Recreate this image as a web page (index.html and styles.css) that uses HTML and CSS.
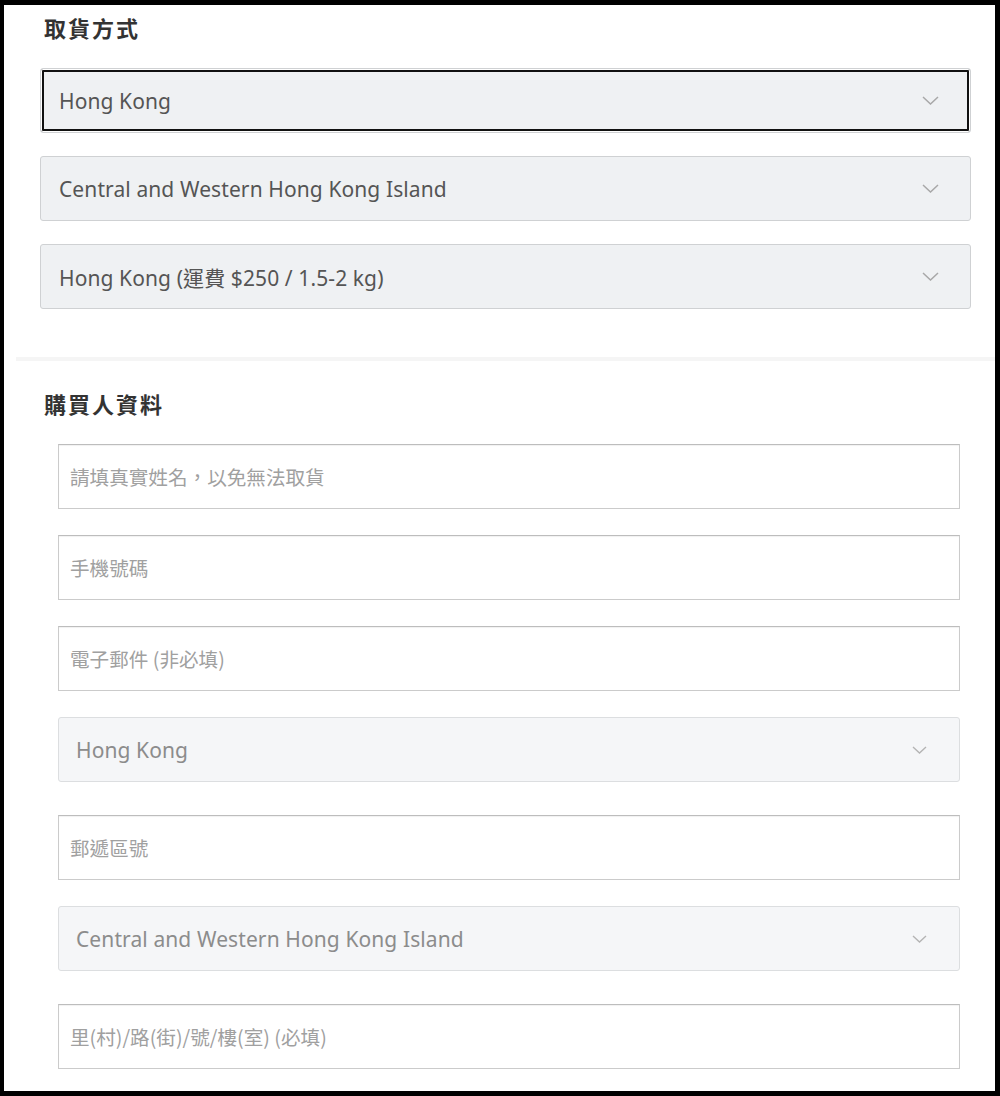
FILE: index.html
```html
<!DOCTYPE html>
<html lang="zh-Hant">
<head>
<meta charset="utf-8">
<title>取貨方式</title>
<link rel="stylesheet" href="styles.css">
</head>
<body>
<div class="frame">
  <section class="pickup">
    <h2 class="title">取貨方式</h2>
    <div class="select select-main is-focused">
      <span class="select-text">Hong Kong</span>
      <svg class="chev" width="17" height="9" viewBox="0 0 17 9"><polyline points="1,1 8.5,8 16,1" fill="none" stroke="#a8a8a8" stroke-width="1.5"/></svg>
    </div>
    <div class="select select-main">
      <span class="select-text">Central and Western Hong Kong Island</span>
      <svg class="chev" width="17" height="9" viewBox="0 0 17 9"><polyline points="1,1 8.5,8 16,1" fill="none" stroke="#a8a8a8" stroke-width="1.5"/></svg>
    </div>
    <div class="select select-main">
      <span class="select-text">Hong Kong (運費 $250 / 1.5-2 kg)</span>
      <svg class="chev" width="17" height="9" viewBox="0 0 17 9"><polyline points="1,1 8.5,8 16,1" fill="none" stroke="#a8a8a8" stroke-width="1.5"/></svg>
    </div>
  </section>
  <div class="divider"></div>
  <section class="buyer">
    <h2 class="title">購買人資料</h2>
    <div class="field"><span class="ph">請填真實姓名，以免無法取貨</span></div>
    <div class="field"><span class="ph">手機號碼</span></div>
    <div class="field"><span class="ph">電子郵件 (非必填)</span></div>
    <div class="select select-sub">
      <span class="select-text">Hong Kong</span>
      <svg class="chev" width="15" height="8" viewBox="0 0 15 8"><polyline points="1,1 7.5,7 14,1" fill="none" stroke="#b4b4b4" stroke-width="1.4"/></svg>
    </div>
    <div class="field"><span class="ph">郵遞區號</span></div>
    <div class="select select-sub">
      <span class="select-text">Central and Western Hong Kong Island</span>
      <svg class="chev" width="15" height="8" viewBox="0 0 15 8"><polyline points="1,1 7.5,7 14,1" fill="none" stroke="#b4b4b4" stroke-width="1.4"/></svg>
    </div>
    <div class="field"><span class="ph">里(村)/路(街)/號/樓(室) (必填)</span></div>
  </section>
</div>
</body>
</html>
```

FILE: styles.css
```css
html {
  background: #000;
}
body {
  margin: 0;
  padding: 5px 5px 5px 4px;
  font-family: "Noto Sans", "Noto Sans CJK TC", sans-serif;
}
.frame {
  background: #fff;
  height: 1086px;
  overflow: hidden;
}
.title {
  margin: 0;
  font-family: "Noto Sans CJK TC", sans-serif;
  font-size: 22px;
  font-weight: 700;
  letter-spacing: 2px;
  line-height: 30px;
  color: #333;
}
.pickup {
  padding: 7px 24px 48px 36px;
}
.pickup .title {
  margin: 0 0 26px 4px;
}
.select {
  box-sizing: border-box;
  height: 65px;
  display: flex;
  align-items: center;
  justify-content: space-between;
  border-radius: 3px;
}
.select-main {
  background: #eff1f3;
  border: 1px solid #cfd1d3;
  padding: 0 31px 0 18px;
  margin-bottom: 23px;
}
.select-main:last-child {
  margin-bottom: 0;
}
.select-text {
  font-size: 21px;
  letter-spacing: 0.1px;
}
.select-main .select-text {
  color: #555;
}
.is-focused {
  box-shadow: inset 0 0 0 1px #fff, inset 0 0 0 3px #111;
}
.divider {
  height: 4px;
  margin-left: 12px;
  background: #f5f5f5;
}
.buyer {
  padding: 27px 35px 0 54px;
}
.buyer .title {
  margin: 0 0 26px -14px;
}
.field {
  box-sizing: border-box;
  height: 65px;
  border: 1px solid #cbcbcb;
  border-top-color: #bdbdbd;
  box-shadow: inset 0 1px 1px rgba(0,0,0,0.06);
  background: #fff;
  display: flex;
  align-items: center;
  padding-left: 11px;
  margin-bottom: 26px;
}
.ph {
  font-family: "Noto Sans CJK TC", sans-serif;
  font-size: 19.6px;
  color: #a0a0a0;
}
.select-sub {
  background: #f5f6f8;
  border: 1px solid #dcdee0;
  padding: 0 32px 0 17px;
  margin-bottom: 33px;
}
.select-sub .select-text {
  color: #8c8c8c;
}
```
